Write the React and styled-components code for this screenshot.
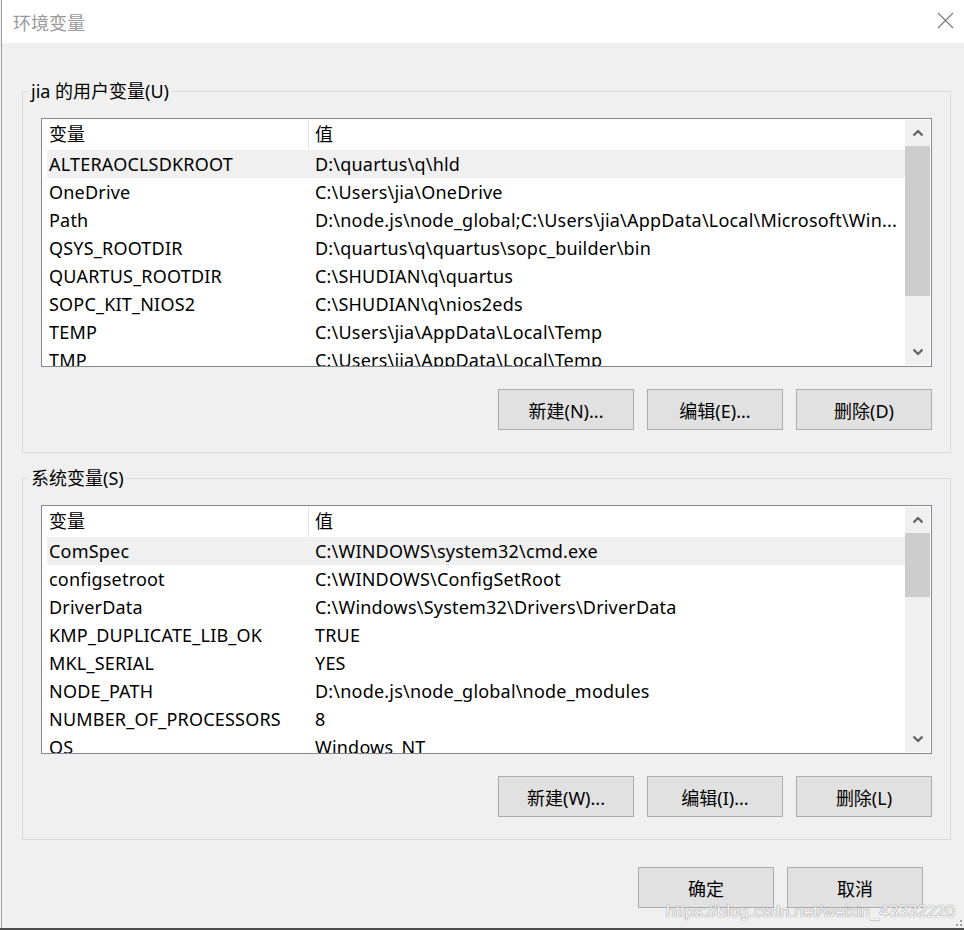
import React from 'react';
import styled, { createGlobalStyle } from 'styled-components';

const GlobalStyle = createGlobalStyle`
  html, body {
    margin: 0;
    padding: 0;
  }
  body {
    width: 964px;
    height: 930px;
    overflow: hidden;
    background: #4d4d4d;
    font-family: "Noto Sans", "Noto Sans CJK SC", sans-serif;
  }
`;

const userVars = [
  ['ALTERAOCLSDKROOT', 'D:\\quartus\\q\\hld'],
  ['OneDrive', 'C:\\Users\\jia\\OneDrive'],
  ['Path', 'D:\\node.js\\node_global;C:\\Users\\jia\\AppData\\Local\\Microsoft\\Win...'],
  ['QSYS_ROOTDIR', 'D:\\quartus\\q\\quartus\\sopc_builder\\bin'],
  ['QUARTUS_ROOTDIR', 'C:\\SHUDIAN\\q\\quartus'],
  ['SOPC_KIT_NIOS2', 'C:\\SHUDIAN\\q\\nios2eds'],
  ['TEMP', 'C:\\Users\\jia\\AppData\\Local\\Temp'],
  ['TMP', 'C:\\Users\\jia\\AppData\\Local\\Temp'],
];

const sysVars = [
  ['ComSpec', 'C:\\WINDOWS\\system32\\cmd.exe'],
  ['configsetroot', 'C:\\WINDOWS\\ConfigSetRoot'],
  ['DriverData', 'C:\\Windows\\System32\\Drivers\\DriverData'],
  ['KMP_DUPLICATE_LIB_OK', 'TRUE'],
  ['MKL_SERIAL', 'YES'],
  ['NODE_PATH', 'D:\\node.js\\node_global\\node_modules'],
  ['NUMBER_OF_PROCESSORS', '8'],
  ['OS', 'Windows_NT'],
];

function Chevron({ down }) {
  return (
    <svg width="12" height="8" viewBox="0 0 12 8">
      <polyline
        points={down ? '1.5,1.5 6,6 10.5,1.5' : '1.5,6.5 6,2 10.5,6.5'}
        fill="none"
        stroke="#606060"
        strokeWidth="2.2"
      />
    </svg>
  );
}

function VarList({ rows, thumb }) {
  return (
    <ListBox>
      <Table>
        <Header>
          <HeadCell>变量</HeadCell>
          <HeadCell $sep>值</HeadCell>
        </Header>
        {rows.map(([name, value], i) => (
          <Row key={name} $selected={i === 0}>
            <Cell>{name}</Cell>
            <Cell>{value}</Cell>
          </Row>
        ))}
      </Table>
      <ScrollBar>
        <ArrowBtn>
          <Chevron />
        </ArrowBtn>
        <Track>
          <Thumb $h={thumb} />
        </Track>
        <ArrowBtn>
          <Chevron down />
        </ArrowBtn>
      </ScrollBar>
    </ListBox>
  );
}

function VarGroup({ title, rows, thumb, buttons }) {
  return (
    <Group>
      <Legend>{title}</Legend>
      <VarList rows={rows} thumb={thumb} />
      <ButtonRow>
        {buttons.map((b) => (
          <Button key={b}>{b}</Button>
        ))}
      </ButtonRow>
    </Group>
  );
}

export default function App() {
  return (
    <Screen>
      <GlobalStyle />
      <Window>
        <TitleBar>
          <Title>环境变量</Title>
          <CloseBtn>
            <svg width="17" height="17" viewBox="0 0 17 17">
              <path d="M1 1L16 16M16 1L1 16" stroke="#777" strokeWidth="1.1" fill="none" />
            </svg>
          </CloseBtn>
        </TitleBar>
        <Body>
          <VarGroup
            title="jia 的用户变量(U)"
            rows={userVars}
            thumb={150}
            buttons={['新建(N)...', '编辑(E)...', '删除(D)']}
          />
          <VarGroup
            title="系统变量(S)"
            rows={sysVars}
            thumb={64}
            buttons={['新建(W)...', '编辑(I)...', '删除(L)']}
          />
          <Footer>
            <Button>确定</Button>
            <Button>取消</Button>
          </Footer>
        </Body>
        <Watermark>https://blog.csdn.net/weixin_43332220</Watermark>
        <Grip>
          <svg width="7" height="7" viewBox="0 0 7 7">
            <rect x="4" y="0" width="2" height="2" fill="#a0a0a0" />
            <rect x="0" y="4" width="2" height="2" fill="#a0a0a0" />
            <rect x="4" y="4" width="2" height="2" fill="#a0a0a0" />
          </svg>
        </Grip>
      </Window>
    </Screen>
  );
}

const Screen = styled.div`
  height: 928px;
  padding-left: 1px;
  background: #f4f4f4;
  display: flex;
`;

const Window = styled.div`
  position: relative;
  flex: 1;
  display: flex;
  flex-direction: column;
  border-left: 1px solid #9c9c9c;
  background: #f0f0f0;
`;

const TitleBar = styled.div`
  height: 43px;
  flex: none;
  display: flex;
  align-items: center;
  justify-content: space-between;
  background: #ffffff;
  padding: 0 10px 0 11px;
`;

const Title = styled.div`
  font-size: 18px;
  color: #9a9a9a;
`;

const CloseBtn = styled.div`
  display: flex;
  margin-top: -2px;
`;

const Body = styled.div`
  flex: 1;
  display: flex;
  flex-direction: column;
  gap: 13px;
  padding: 36px 13px 0 20px;
`;

const Group = styled.fieldset`
  margin: 0;
  min-width: 0;
  padding: 15px 18px 22px 18px;
  border: 1px solid #dadada;
`;

const Legend = styled.legend`
  margin-left: -13px;
  padding: 0 3px;
  font-size: 18px;
  line-height: 24px;
  color: #000;
`;

const ListBox = styled.div`
  height: 249px;
  box-sizing: border-box;
  border: 1px solid #828790;
  background: #ffffff;
  display: flex;
`;

const Table = styled.div`
  flex: 1;
  min-width: 0;
  overflow: hidden;
`;

const Header = styled.div`
  height: 31px;
  display: grid;
  grid-template-columns: 266px 1fr;
  align-items: stretch;
`;

const HeadCell = styled.div`
  font-size: 18px;
  line-height: 30px;
  color: #000;
  padding-left: ${(p) => (p.$sep ? '6px' : '7px')};
  border-left: ${(p) => (p.$sep ? '1px solid #e5e5e5' : 'none')};
`;

const Row = styled.div`
  height: 28px;
  margin-left: 5px;
  display: grid;
  grid-template-columns: 266px 1fr;
  background: ${(p) => (p.$selected ? '#f0f0f0' : 'transparent')};
`;

const Cell = styled.div`
  font-size: 18px;
  line-height: 28px;
  letter-spacing: 0.2px;
  color: #000;
  padding-left: 2px;
  white-space: nowrap;
  overflow: hidden;
`;

const ScrollBar = styled.div`
  width: 25px;
  margin: 1px 1px 1px 0;
  flex: none;
  display: flex;
  flex-direction: column;
  background: #f0f0f0;
`;

const ArrowBtn = styled.div`
  height: 26px;
  flex: none;
  display: flex;
  align-items: center;
  justify-content: center;
`;

const Track = styled.div`
  flex: 1;
`;

const Thumb = styled.div`
  height: ${(p) => p.$h}px;
  background: #cdcdcd;
`;

const ButtonRow = styled.div`
  display: flex;
  justify-content: flex-end;
  gap: 13px;
  margin-top: 22px;
`;

const Button = styled.div`
  width: 136px;
  height: 41px;
  box-sizing: border-box;
  border: 1px solid #adadad;
  background: #e1e1e1;
  display: flex;
  align-items: center;
  justify-content: center;
  font-size: 18px;
  color: #000;
`;

const Footer = styled.div`
  display: flex;
  justify-content: flex-end;
  gap: 13px;
  margin-top: 14px;
  padding-right: 28px;
`;

const Watermark = styled.div`
  position: absolute;
  right: 9px;
  bottom: 6px;
  font-family: "Liberation Sans", Arial, sans-serif;
  font-size: 17px;
  color: rgba(255, 255, 255, 0.95);
  text-shadow: 0 0 1px #8a8a8a, 0 0 1px #8a8a8a;
`;

const Grip = styled.div`
  position: absolute;
  right: 1px;
  bottom: 1px;
  display: flex;
`;
